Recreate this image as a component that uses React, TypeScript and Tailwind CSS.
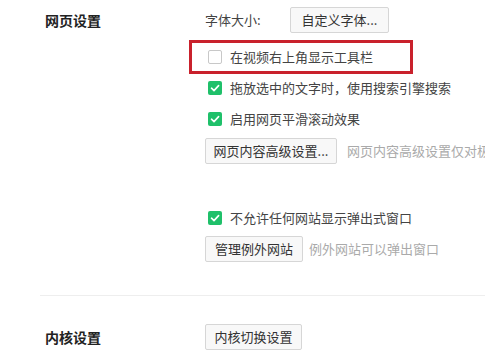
import React from 'react';

const font = { fontFamily: '"Noto Sans CJK SC", "Microsoft YaHei", sans-serif' };

const Check = ({ checked }: { checked: boolean }) =>
  checked ? (
    <span className="flex h-[14px] w-[14px] shrink-0 items-center justify-center rounded-[2px] bg-[#1fc06a]">
      <svg width="10" height="10" viewBox="0 0 10 10" fill="none">
        <path d="M1.5 5.2 L4 7.6 L8.6 2.6" stroke="white" strokeWidth="1.6" strokeLinecap="round" strokeLinejoin="round" />
      </svg>
    </span>
  ) : (
    <span className="h-[14px] w-[14px] shrink-0 rounded-[2px] border border-[#c8c8c8] bg-white" />
  );

const Btn = ({ children, w }: { children: React.ReactNode; w: string }) => (
  <button className={`flex h-[26px] ${w} shrink-0 items-center justify-center rounded-[2px] border border-[#d6d6d6] bg-[#f8f8f8] text-[13px] text-[#333]`}>
    {children}
  </button>
);

const CheckRow = ({ checked, label }: { checked: boolean; label: string }) => (
  <div className="flex h-[31px] items-center gap-[8px] whitespace-nowrap pl-[3px] text-[13px] text-[#444]">
    <Check checked={checked} />
    <span>{label}</span>
  </div>
);

export default function App() {
  return (
    <div className="h-[353px] w-[485px] overflow-hidden bg-white" style={font}>
      <div className="flex pt-[7px]">
        <div className="w-[205px] shrink-0 pl-[45px] pt-[3px] text-[14px] font-bold text-[#222]">网页设置</div>
        <div className="flex min-w-0 flex-1 flex-col">
          <div className="flex items-center">
            <span className="w-[85px] shrink-0 text-[13px] text-[#444]">字体大小:</span>
            <Btn w="w-[99px]">自定义字体...</Btn>
          </div>
          <div className="relative mt-[8px]">
            <span className="absolute left-[-16px] top-[-1px] h-[34px] w-[224px] border-[3px] border-[#c9212c]" />
            <CheckRow checked={false} label="在视频右上角显示工具栏" />
          </div>
          <CheckRow checked label="拖放选中的文字时，使用搜索引擎搜索" />
          <CheckRow checked label="启用网页平滑滚动效果" />
          <div className="mt-[4px] flex items-center gap-[10px] whitespace-nowrap">
            <Btn w="w-[132px]">网页内容高级设置...</Btn>
            <span className="text-[13px] text-[#aaa]">网页内容高级设置仅对极速模式生效</span>
          </div>
          <div className="mt-[38px]">
            <CheckRow checked label="不允许任何网站显示弹出式窗口" />
          </div>
          <div className="mt-[3px] flex items-center gap-[6px] whitespace-nowrap">
            <Btn w="w-[98px]">管理例外网站</Btn>
            <span className="text-[13px] text-[#aaa]">例外网站可以弹出窗口</span>
          </div>
        </div>
      </div>
      <div className="ml-[40px] mt-[33px] h-px bg-[#eeeeee]" />
      <div className="mt-[28px] flex items-center">
        <div className="w-[205px] shrink-0 pl-[45px] text-[14px] font-bold text-[#222]">内核设置</div>
        <Btn w="w-[97px]">内核切换设置</Btn>
      </div>
    </div>
  );
}
